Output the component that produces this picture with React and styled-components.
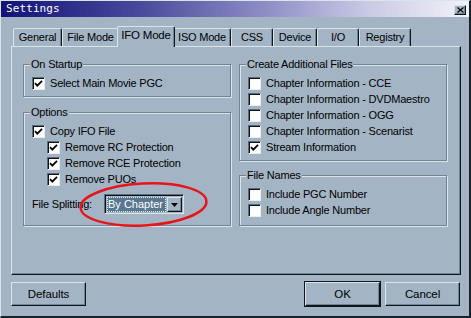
import React from 'react';
import styled, { createGlobalStyle, css } from 'styled-components';

const BG = '#a3b5c4';
const LIGHT = '#dae4eb';
const DARK = '#0e151b';
const MID = '#6f8596';

const GlobalStyle = createGlobalStyle`
  html, body { margin: 0; padding: 0; background: ${BG}; }
  body {
    font-family: "Liberation Sans", Arial, sans-serif;
    font-size: 11px;
    letter-spacing: -0.2px;
    color: #000;
  }
`;

const raised = css`
  border-top: 1px solid ${LIGHT};
  border-left: 1px solid ${LIGHT};
  border-right: 1px solid ${DARK};
  border-bottom: 1px solid ${DARK};
  box-shadow: inset -1px -1px 0 ${MID};
`;

const Window = styled.div`
  width: 471px;
  height: 318px;
  box-sizing: border-box;
  background: ${BG};
  border-top: 1px solid ${LIGHT};
  border-left: 1px solid ${LIGHT};
  border-right: 2px solid #18222b;
  border-bottom: 2px solid #18222b;
  display: flex;
  flex-direction: column;
`;

const TitleBar = styled.div`
  height: 16px;
  display: flex;
  align-items: center;
  justify-content: space-between;
  padding: 0 3px 0 5px;
  background: linear-gradient(to right, #12127a 0%, #4a4a9c 30%, #8a8ac4 55%, #c8c9e4 78%, #f2f3f8 100%);
`;

const Title = styled.span`
  color: #fff;
  font-family: "DejaVu Sans Mono", "Liberation Mono", monospace;
  font-size: 11px;
  letter-spacing: 0.1px;
  line-height: 16px;
`;

const CloseBox = styled.div`
  width: 12px;
  height: 10px;
  margin-top: 2px;
  box-sizing: border-box;
  background: ${BG};
  ${raised};
  display: flex;
  align-items: center;
  justify-content: center;
`;

const Main = styled.div`
  padding: 9px 8px 0 10px;
`;

const TabStrip = styled.div`
  height: 20px;
  display: flex;
  align-items: flex-end;
  padding-left: 2px;
  position: relative;
  z-index: 1;
`;

const Tab = styled.div`
  width: ${p => p.$w}px;
  height: ${p => (p.$active ? 21 : 18)}px;
  box-sizing: border-box;
  margin: ${p => (p.$active ? '0 -2px -1px' : '0')};
  position: relative;
  z-index: ${p => (p.$active ? 2 : 1)};
  background: ${BG};
  border-top: 1px solid ${LIGHT};
  border-left: 1px solid ${LIGHT};
  border-right: 1px solid ${DARK};
  border-top-left-radius: 2px;
  border-top-right-radius: 2px;
  box-shadow: inset -1px 0 0 ${MID};
  text-align: center;
  font-size: ${p => (p.$active ? '11.5px' : '11px')};
  line-height: ${p => (p.$active ? '17px' : '16px')};
  white-space: nowrap;
`;

const Panel = styled.div`
  position: relative;
  height: 229px;
  box-sizing: border-box;
  ${raised};
  padding: 17px 0 0 11px;
  display: grid;
  grid-template-columns: 208px 208px;
  column-gap: 8px;
  align-content: start;
`;

const Column = styled.div`
  display: flex;
  flex-direction: column;
  gap: ${p => p.$gap}px;
`;

const Group = styled.div`
  position: relative;
  border: 1px solid ${MID};
  box-shadow: 1px 1px 0 ${LIGHT}, inset 1px 1px 0 ${LIGHT};
  padding: 10px 8px ${p => p.$pb}px 8px;
`;

const Legend = styled.span`
  position: absolute;
  top: -7px;
  left: 6px;
  padding: 0 1px;
  background: ${BG};
  line-height: 13px;
`;

const Row = styled.div`
  height: 16px;
  display: flex;
  align-items: center;
  gap: 5px;
  padding-left: ${p => (p.$indent ? 15 : 0)}px;
  white-space: nowrap;
`;

const Box = styled.span`
  width: 13px;
  height: 13px;
  box-sizing: border-box;
  background: #fff;
  border-top: 1px solid #5a6b7a;
  border-left: 1px solid #5a6b7a;
  border-right: 1px solid #e8eef2;
  border-bottom: 1px solid #e8eef2;
  box-shadow: inset 1px 1px 0 #0c1218;
  display: flex;
  align-items: center;
  justify-content: center;
  flex: none;
`;

const SplitRow = styled.div`
  display: flex;
  align-items: center;
  margin-top: 7px;
`;

const SplitLabel = styled.span`
  width: 72px;
`;

const Combo = styled.div`
  width: 80px;
  height: 20px;
  box-sizing: border-box;
  border-top: 1px solid #5a6b7a;
  border-left: 1px solid #5a6b7a;
  border-right: 1px solid ${LIGHT};
  border-bottom: 1px solid ${LIGHT};
  box-shadow: inset 1px 1px 0 #0c1218;
  padding: 2px 1px 1px 2px;
  display: flex;
  gap: 1px;
  background: ${BG};
`;

const ComboValue = styled.div`
  flex: 1;
  min-width: 0;
  background: #587790;
  color: #fff;
  outline: 1px dotted #e8eef2;
  outline-offset: -1px;
  padding-left: 1px;
  line-height: 15px;
  font-size: 11px;
  letter-spacing: 0;
  white-space: nowrap;
  overflow: hidden;
`;

const ComboButton = styled.div`
  width: 15px;
  flex: none;
  box-sizing: border-box;
  ${raised};
  display: flex;
  align-items: center;
  justify-content: center;
`;

const Overlay = styled.svg`
  position: absolute;
  left: 0;
  top: 0;
  width: 100%;
  height: 100%;
  pointer-events: none;
  overflow: visible;
`;

const Footer = styled.div`
  display: flex;
  padding: 7px 9px 0 10px;
  gap: 5px;
`;

const Button = styled.button`
  width: 75px;
  height: 24px;
  box-sizing: border-box;
  margin-left: ${p => (p.$push ? 'auto' : '0')};
  background: ${BG};
  font-family: inherit;
  font-size: 11.5px;
  letter-spacing: -0.1px;
  color: #000;
  padding: 0;
  border-top: 1px solid ${LIGHT};
  border-left: 1px solid ${LIGHT};
  border-right: 1px solid ${DARK};
  border-bottom: 1px solid ${DARK};
  box-shadow: ${p =>
    p.$default
      ? `0 0 0 1px ${DARK}, inset -1px -1px 0 ${MID}`
      : `inset -1px -1px 0 ${MID}`};
`;

const Check = ({ on }) => (
  <Box>
    {on && (
      <svg width="9" height="9" viewBox="0 0 9 9">
        <path d="M1 4.2 L3.3 6.6 L8 1.8" fill="none" stroke="#000" strokeWidth="1.8" />
      </svg>
    )}
  </Box>
);

const Option = ({ on, indent, children }) => (
  <Row $indent={indent}>
    <Check on={on} />
    <span>{children}</span>
  </Row>
);

const tabs = [
  { label: 'General', w: 49 },
  { label: 'File Mode', w: 57 },
  { label: 'IFO Mode', w: 62, active: true },
  { label: 'ISO Mode', w: 58 },
  { label: 'CSS', w: 42 },
  { label: 'Device', w: 44 },
  { label: 'I/O', w: 42 },
  { label: 'Registry', w: 52 },
];

const createFiles = [
  ['Chapter Information - CCE', false],
  ['Chapter Information - DVDMaestro', false],
  ['Chapter Information - OGG', false],
  ['Chapter Information - Scenarist', false],
  ['Stream Information', true],
];

export default function App() {
  return (
    <>
      <GlobalStyle />
      <Window>
        <TitleBar>
          <Title>Settings</Title>
          <CloseBox>
            <svg width="7" height="6" viewBox="0 0 7 6">
              <path d="M0.5 0.5 L6.5 5.5 M6.5 0.5 L0.5 5.5" stroke="#000" strokeWidth="1.2" />
            </svg>
          </CloseBox>
        </TitleBar>

        <Main>
          <TabStrip>
            {tabs.map(t => (
              <Tab key={t.label} $w={t.active ? t.w - 4 : t.w} $active={t.active}>
                {t.label}
              </Tab>
            ))}
          </TabStrip>

          <Panel>
            <Column $gap={15}>
              <Group $pb={5}>
                <Legend>On Startup</Legend>
                <Option on>Select Main Movie PGC</Option>
              </Group>
              <Group $pb={11}>
                <Legend>Options</Legend>
                <Option on>Copy IFO File</Option>
                <Option on indent>Remove RC Protection</Option>
                <Option on indent>Remove RCE Protection</Option>
                <Option on indent>Remove PUOs</Option>
                <SplitRow>
                  <SplitLabel>File Splitting:</SplitLabel>
                  <Combo>
                    <ComboValue>By Chapter</ComboValue>
                    <ComboButton>
                      <svg width="7" height="4" viewBox="0 0 7 4">
                        <path d="M0 0 H7 L3.5 4 Z" fill="#000" />
                      </svg>
                    </ComboButton>
                  </Combo>
                </SplitRow>
              </Group>
            </Column>

            <Column $gap={14}>
              <Group $pb={5}>
                <Legend>Create Additional Files</Legend>
                {createFiles.map(([label, on]) => (
                  <Option key={label} on={on}>{label}</Option>
                ))}
              </Group>
              <Group $pb={7}>
                <Legend>File Names</Legend>
                <Option>Include PGC Number</Option>
                <Option>Include Angle Number</Option>
              </Group>
            </Column>

            <Overlay>
              <ellipse
                cx="131.5"
                cy="157.5"
                rx="63"
                ry="21"
                fill="none"
                stroke="#e8141c"
                strokeWidth="2.5"
                transform="rotate(-3 131.5 157.5)"
              />
            </Overlay>
          </Panel>
        </Main>

        <Footer>
          <Button>Defaults</Button>
          <Button $push $default>OK</Button>
          <Button>Cancel</Button>
        </Footer>
      </Window>
    </>
  );
}
